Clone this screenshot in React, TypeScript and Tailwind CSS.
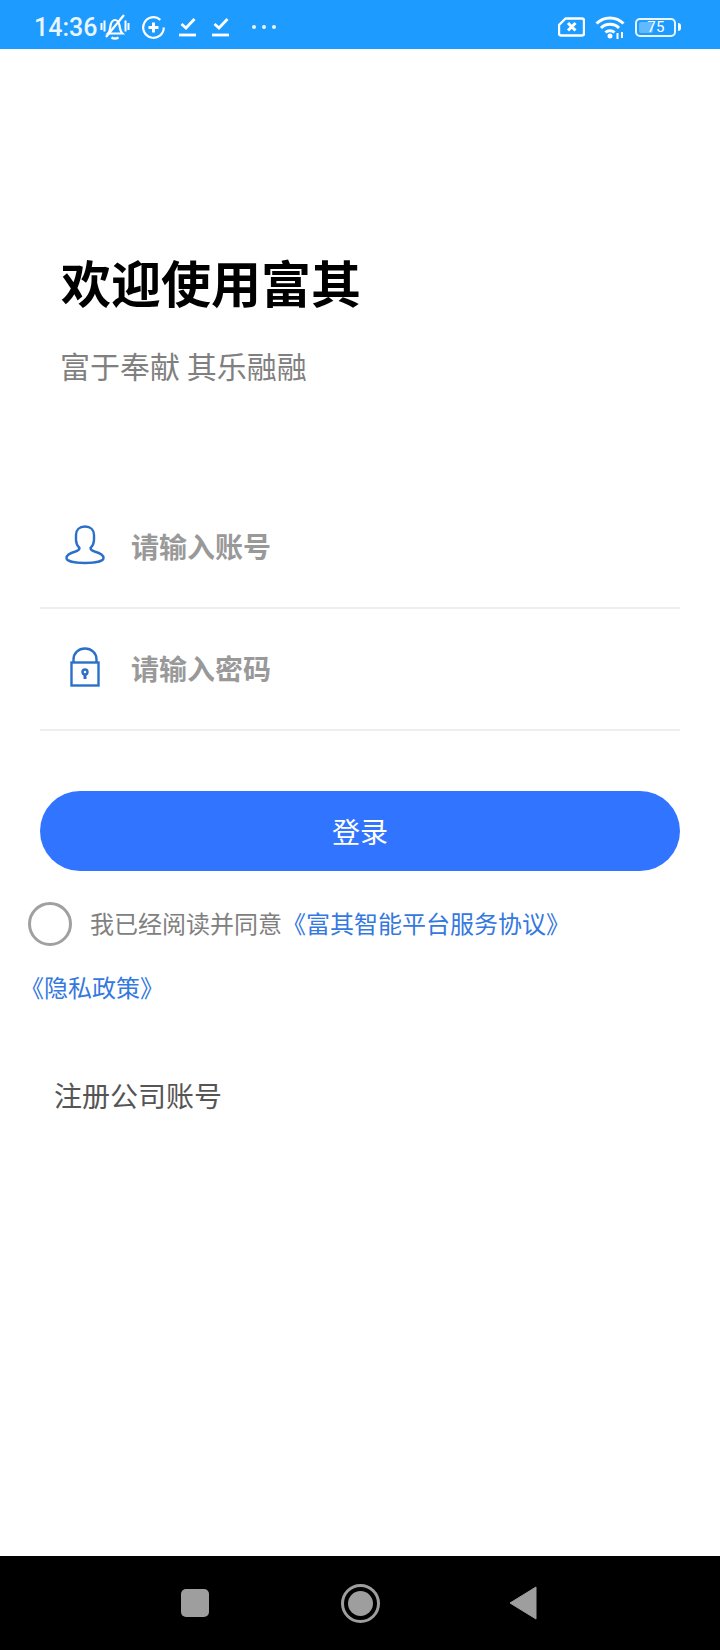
const CJK = 'font-["Noto_Sans_CJK_SC","Noto_Sans",sans-serif]';

function StatusBar() {
  return (
    <div className="flex h-[49px] items-center justify-between bg-[#1e9bff] pl-[34px] pr-[39px] pt-[5px] text-white">
      <div className="flex items-center">
        <span className='font-["Roboto",sans-serif] text-[25px] font-medium leading-none opacity-90'>14:36</span>
        <svg className="ml-[3px]" width="30" height="26" viewBox="0 0 30 26" fill="none" stroke="white" strokeWidth="2.200">
          <path d="M8 19.500c2-2 2-4 2.500-8 .5-3 2.500-5.500 4.500-5.500s4 2.500 4.500 5.500c.5 4 1 6 3 8z" />
          <path d="M11.500 23.500c2 1.200 5 1.200 7 0" strokeWidth="2.400" />
          <path d="M6 23L24 1" />
          <path d="M1.500 9v7M4.500 6.500v11M25.500 6.500v11M28.500 9v7" strokeWidth="2" />
        </svg>
        <svg className="ml-[12px]" width="23" height="23" viewBox="0 0 23 23" fill="none" stroke="white" strokeWidth="2.200">
          <path d="M21.800 11.500a10.300 10.300 0 1 1-3.500-7.700" />
          <path d="M11.500 6.500v10M6.500 11.500h10" strokeWidth="3" />
        </svg>
        <svg className="ml-[14px]" width="18" height="20" viewBox="0 0 18 20" fill="none" stroke="white" strokeWidth="2.800">
          <path d="M2.500 7l4.500 4L15.500 2" />
          <path d="M0 18h17" />
        </svg>
        <svg className="ml-[15px]" width="18" height="20" viewBox="0 0 18 20" fill="none" stroke="white" strokeWidth="2.800">
          <path d="M2.500 7l4.500 4L15.500 2" />
          <path d="M0 18h17" />
        </svg>
        <div className="ml-[22px] flex gap-[6px]">
          <span className="size-[4px] rounded-full bg-white/90" />
          <span className="size-[4px] rounded-full bg-white/90" />
          <span className="size-[4px] rounded-full bg-white/90" />
        </div>
      </div>
      <div className="flex items-center">
        <svg width="27" height="20" viewBox="0 0 27 20" fill="none" stroke="white" strokeWidth="2.400">
          <path d="M7.500 1.500h16.500a2 2 0 0 1 2 2v13a2 2 0 0 1-2 2H3a2 2 0 0 1-2-2V8z" strokeLinejoin="round" />
          <path d="M10 6l7.500 7.500M17.500 6L10 13.500" strokeWidth="3" />
        </svg>
        <svg className="ml-[10px]" width="30" height="24" viewBox="0 0 30 24" fill="none" stroke="white" strokeWidth="3">
          <path d="M1.500 8.500c7.500-7.500 19.500-7.500 27 0" />
          <path d="M6 13c5-5 13-5 18 0" />
          <path d="M10.500 17.500c2.500-2.500 6.500-2.500 9 0" />
          <circle cx="15" cy="21" r="2.500" fill="white" stroke="none" />
          <path d="M22.500 18v6M27 17v6" strokeWidth="2" />
        </svg>
        <div className="ml-[10px] flex items-center">
          <div className='relative flex h-[19px] w-[41px] items-center justify-end rounded-[5px] border-2 border-white/90 pr-[9px] font-["Roboto",sans-serif] text-[15px] leading-none tracking-[0.5px]'>
            <span className="absolute inset-y-[2px] left-[2px] w-[14px] rounded-[2px] bg-white/30" />
            <span className="relative">75</span>
          </div>
          <span className="ml-[2px] h-[8px] w-[3px] rounded-r-full bg-white" />
        </div>
      </div>
    </div>
  );
}

function UserIcon() {
  return (
    <svg width="40" height="40" viewBox="0 0 40 40" fill="none" stroke="#2a6fc9" strokeWidth="2.400">
      <path d="M20 1.500c-5.500 0-9 3.500-9 8.500v5c0 3.500 1.500 6 3.500 8 0 1.500-1 2.500-4 3.500C5 28 1.500 30 1.500 33c0 3 8 5 18.500 5s18.500-2 18.500-5c0-3-3.500-5-9-6.500-3-1-4-2-4-3.500 2-2 3.500-4.500 3.500-8v-5c0-5-3.500-8.500-9-8.500z" />
    </svg>
  );
}

function LockIcon() {
  return (
    <svg width="30" height="40" viewBox="0 0 30 40" fill="none" stroke="#2a6fc9" strokeWidth="2.400">
      <rect x="1.500" y="15.500" width="27" height="23" />
      <path d="M3.500 15.500v-3c0-6.500 5-11 11.500-11s11.500 4.500 11.500 11v3" />
      <circle cx="15" cy="25" r="2.500" />
      <path d="M15 27v5" strokeWidth="3" />
    </svg>
  );
}

function Field({ icon, placeholder }: { icon: React.ReactNode; placeholder: string }) {
  return (
    <div className="mx-[40px] flex h-[122px] items-center border-b-2 border-[#eeeeee]">
      <div className="mb-[4px] flex w-[91px] justify-center pr-[2px]">{icon}</div>
      <span className="mb-[2px] text-[28px] font-bold leading-none text-[#999999]">{placeholder}</span>
    </div>
  );
}

export default function App() {
  return (
    <div className={`flex h-[1650px] w-[720px] flex-col bg-white ${CJK}`}>
      <StatusBar />
      <div className="flex-1">
        <h1 className="ml-[61px] mt-[200px] text-[50px] font-bold leading-[64px] text-black">欢迎使用富其</h1>
        <p className="ml-[60px] mt-[34px] text-[30px] leading-[36px] text-[#808080]">富于奉献 其乐融融</p>
        <div className="mt-[104px]">
          <Field icon={<UserIcon />} placeholder="请输入账号" />
          <Field icon={<LockIcon />} placeholder="请输入密码" />
        </div>
        <button className="mx-[40px] mt-[60px] block h-[80px] w-[640px] rounded-full bg-[#3174ff] text-[28px] text-white">
          登录
        </button>
        <div className="mt-[31px] flex items-center pl-[28px]">
          <span className="size-[44px] rounded-full border-[3px] border-[#a0a0a0]" />
          <span className="mb-[3px] ml-[18px] text-[24px] leading-[36px] text-[#808080]">我已经阅读并同意</span>
          <span className="mb-[3px] text-[24px] leading-[36px] text-[#3478e0]">《富其智能平台服务协议》</span>
        </div>
        <p className="ml-[20px] mt-[23px] text-[24px] leading-[36px] text-[#3478e0]">《隐私政策》</p>
        <p className="ml-[54px] mt-[72px] text-[28px] leading-[36px] text-[#555555]">注册公司账号</p>
      </div>
      <div className="flex h-[94px] items-center bg-black pl-[181px]">
        <span className="size-[28px] rounded-[5px] bg-[#9e9e9e]" />
        <span className="ml-[132px] flex size-[39px] items-center justify-center rounded-full border-[3px] border-[#9e9e9e]">
          <span className="size-[25px] rounded-full bg-[#9e9e9e]" />
        </span>
        <svg className="ml-[129px]" width="28" height="34" viewBox="0 0 28 34">
          <path d="M27 1v32L1 17z" fill="#9e9e9e" stroke="#9e9e9e" strokeLinejoin="round" />
        </svg>
      </div>
    </div>
  );
}
